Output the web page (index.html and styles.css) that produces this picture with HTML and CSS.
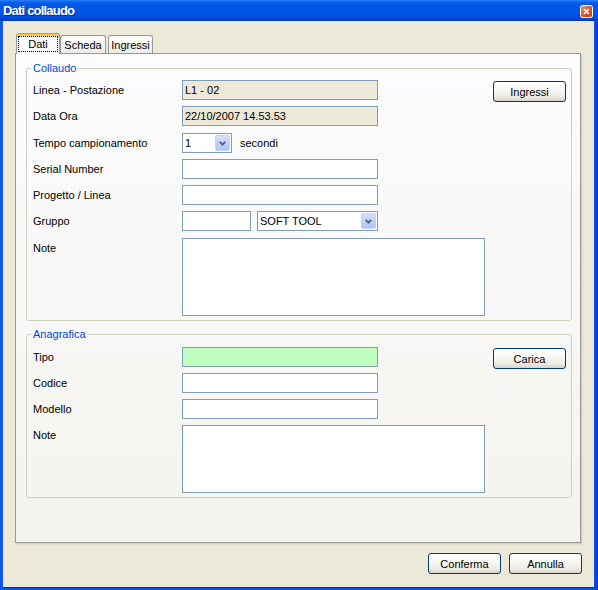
FILE: index.html
```html
<!DOCTYPE html>
<html lang="it">
<head>
<meta charset="utf-8">
<title>Dati collaudo</title>
<link rel="stylesheet" href="styles.css">
</head>
<body>
<div class="window">
  <div class="titlebar">
    <span class="title">Dati collaudo</span>
    <svg class="close" width="13" height="13" viewBox="0 0 13 13">
      <defs>
        <linearGradient id="cg" x1="0" y1="0" x2="1" y2="1">
          <stop offset="0" stop-color="#F29B78"/>
          <stop offset="0.45" stop-color="#E2582E"/>
          <stop offset="1" stop-color="#C43C14"/>
        </linearGradient>
      </defs>
      <rect x="0.5" y="0.5" width="12" height="12" rx="2" fill="url(#cg)" stroke="#FFFFFF"/>
      <path d="M4 4 L9 9 M9 4 L4 9" stroke="#FFFFFF" stroke-width="1.7" fill="none"/>
    </svg>
  </div>
  <div class="client">
    <div class="tabstrip">
      <div class="tab tab-active"><span class="focus">Dati</span></div>
      <div class="tab tab-scheda">Scheda</div>
      <div class="tab tab-ingressi">Ingressi</div>
    </div>
    <div class="panel">
      <fieldset class="group">
        <legend class="legend">Collaudo</legend>
        <div class="group-body">
          <div class="form rows-collaudo">
            <div class="label">Linea - Postazione</div>
            <div class="field field-wide readonly">L1 - 02</div>
            <div class="label">Data Ora</div>
            <div class="field field-wide readonly">22/10/2007 14.53.53</div>
            <div class="label">Tempo campionamento</div>
            <div class="inline inline-wide">
              <div class="combo combo-small"><span class="combo-text">1</span><span class="combo-btn"><svg width="7" height="5" viewBox="0 0 7 5"><polyline points="0.8,0.8 3.5,3.6 6.2,0.8" fill="none" stroke="#4D6185" stroke-width="1.8"/></svg></span></div>
              <span class="unit">secondi</span>
            </div>
            <div class="label">Serial Number</div>
            <div class="field field-wide"></div>
            <div class="label">Progetto / Linea</div>
            <div class="field field-wide"></div>
            <div class="label">Gruppo</div>
            <div class="inline">
              <div class="field field-short"></div>
              <div class="combo combo-large"><span class="combo-text">SOFT TOOL</span><span class="combo-btn"><svg width="7" height="5" viewBox="0 0 7 5"><polyline points="0.8,0.8 3.5,3.6 6.2,0.8" fill="none" stroke="#4D6185" stroke-width="1.8"/></svg></span></div>
            </div>
            <div class="label">Note</div>
            <div class="field memo memo-tall"></div>
          </div>
          <button class="btn btn-side">Ingressi</button>
        </div>
      </fieldset>
      <fieldset class="group group-second">
        <legend class="legend">Anagrafica</legend>
        <div class="group-body">
          <div class="form rows-anagrafica">
            <div class="label">Tipo</div>
            <div class="field field-wide valid"></div>
            <div class="label">Codice</div>
            <div class="field field-wide"></div>
            <div class="label">Modello</div>
            <div class="field field-wide"></div>
            <div class="label">Note</div>
            <div class="field memo memo-short"></div>
          </div>
          <button class="btn btn-side">Carica</button>
        </div>
      </fieldset>
    </div>
    <div class="footer">
      <button class="btn">Conferma</button>
      <button class="btn">Annulla</button>
    </div>
  </div>
</div>
</body>
</html>
```

FILE: styles.css
```css
* { box-sizing: border-box; }
html, body { margin: 0; padding: 0; }
body {
  width: 598px;
  height: 590px;
  overflow: hidden;
  font-family: "Liberation Sans", Arial, sans-serif;
  font-size: 11px;
  color: #000;
  background: #0A4BDD;
}
.window {
  width: 598px;
  height: 590px;
  display: flex;
  flex-direction: column;
  background: linear-gradient(90deg, #0B3FD0 0, #1062F0 1px, #0A52E6 3px, #0A52E6 594px, #0848D8 596px, #0636C4 598px);
}
.titlebar {
  height: 21px;
  flex: none;
  display: flex;
  align-items: center;
  justify-content: space-between;
  padding: 0 5px 0 3px;
  background: linear-gradient(#2F84FA 0, #0A62EE 2px, #0057E6 5px, #0055E3 13px, #004DDA 18px, #0040C4 20px, #0033A8 21px);
}
.title {
  color: #FFFFFF;
  font-weight: bold;
  font-size: 13px;
  letter-spacing: -0.8px;
  text-shadow: 1px 1px 0 #0A2A9A;
}
.close { display: block; margin-top: 1px; }
.client {
  flex: 1;
  margin: 0 4px 3px 3px;
  background: #ECE9D8;
  padding: 12px 13px 0 12px;
  display: flex;
  flex-direction: column;
  box-shadow: 0 1px 0 #0630B8;
}
.tabstrip {
  height: 21px;
  flex: none;
  display: flex;
  align-items: flex-end;
  margin-bottom: -1px;
  position: relative;
  z-index: 1;
}
.tab {
  height: 18px;
  margin-bottom: 1px;
  border: 1px solid #919B9C;
  border-bottom: none;
  border-radius: 3px 3px 0 0;
  background: linear-gradient(#FFFFFF, #F6F6F2 50%, #ECEBE5);
  display: flex;
  align-items: center;
  justify-content: center;
  padding-top: 1px;
}
.tab-active {
  width: 44px;
  height: 21px;
  margin-left: 1px;
  margin-bottom: 0;
  border-top: 1px solid #E68B2C;
  box-shadow: inset 0 2px 0 #FFC73C;
  background: #FCFCFE;
  padding-top: 2px;
  align-items: flex-start;
}
.focus {
  display: flex;
  align-items: center;
  justify-content: center;
  width: 40px;
  height: 16px;
  border: 1px dotted #000;
}
.tab-scheda { width: 46px; }
.tab-ingressi { width: 45px; margin-left: 2px; }
.panel {
  height: 490px;
  flex: none;
  border: 1px solid #919B9C;
  background: linear-gradient(#FCFCFE, #F4F3EE);
  padding: 8px 8px 0 10px;
  box-shadow: 1px 1px 0 #D3D0C2, 2px 2px 0 #E2DFD1;
}
.group {
  margin: 0;
  min-width: 0;
  border: 1px solid #D0D0BF;
  border-radius: 3px;
  padding: 5px 5px 4px 6px;
}
.group-second { margin-top: 7px; padding-top: 6px; }
.legend {
  color: #0046D5;
  padding: 0 2px;
  margin-left: -2px;
  line-height: 13px;
}
.group-body {
  display: flex;
  justify-content: space-between;
  align-items: flex-start;
}
.form {
  display: grid;
  grid-template-columns: 149px 311px;
  row-gap: 6px;
  align-items: start;
}
.rows-collaudo { grid-template-rows: 20px 21px 20px 20px 20px 21px 78px; }
.rows-anagrafica { grid-template-rows: 20px 20px 20px 68px; }
.label { line-height: 20px; white-space: nowrap; }
.field {
  height: 20px;
  border: 1px solid #7F9DB9;
  background: #FFFFFF;
  padding: 0 2px;
  line-height: 18px;
  white-space: nowrap;
}
.field-wide { width: 196px; }
.field-short { width: 69px; }
.readonly { background: #ECE9D8; }
.valid { background: #C0FFC0; }
.memo { width: 303px; }
.memo-tall { height: 78px; }
.memo-short { height: 68px; }
.inline { display: flex; align-items: center; gap: 6px; }
.inline-wide { gap: 8px; }
.combo {
  height: 20px;
  border: 1px solid #7F9DB9;
  background: #FFFFFF;
  display: flex;
  align-items: center;
  padding: 0 1px 0 2px;
}
.combo-small { width: 50px; }
.combo-large { width: 121px; }
.combo-text { flex: 1; line-height: 18px; }
.combo-btn {
  width: 15px;
  height: 16px;
  border: 1px solid #C4D4F8;
  border-radius: 2px;
  background: linear-gradient(#D6E2FD, #C1D3FB 45%, #B2C6F6);
  display: flex;
  align-items: center;
  justify-content: center;
}
.combo-btn svg { display: block; }
.unit { line-height: 18px; }
.btn {
  width: 73px;
  height: 21px;
  border: 1px solid #003C74;
  border-radius: 3px;
  background: linear-gradient(#FFFFFF, #F8F8F5 40%, #EEEDE6 75%, #D9D4C8);
  font-family: "Liberation Sans", Arial, sans-serif;
  font-size: 11px;
  color: #000;
  padding: 0;
  margin: 0;
}
.btn-side { margin-top: 1px; }
.footer {
  display: flex;
  justify-content: flex-end;
  gap: 8px;
  margin-top: 10px;
  margin-right: -1px;
}
```
